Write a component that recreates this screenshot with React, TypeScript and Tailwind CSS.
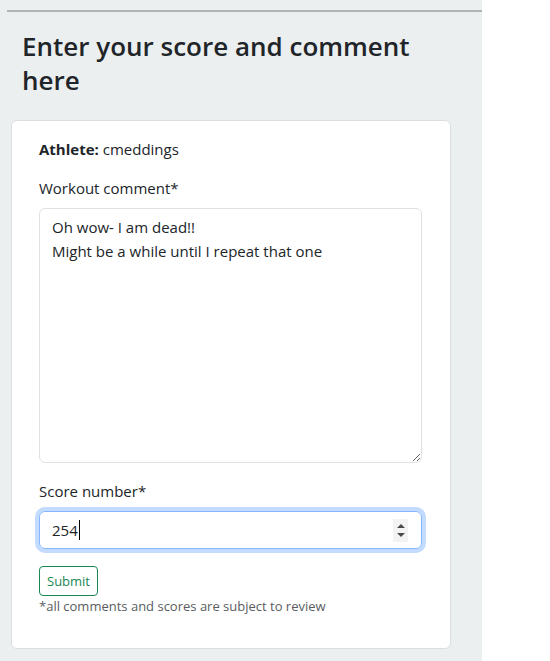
export default function App() {
  const font = { fontFamily: '"Open Sans", "Noto Sans", sans-serif' }

  return (
    <div className="flex h-[661px] w-[550px] bg-white text-[#212529]" style={font}>
      <div className="w-[482px] bg-[#eceff0] pt-[10px]">
        {/* top rule */}
        <div className="ml-[7px] h-[2px] bg-[#b1b4b6]" />

        <h2 className="mt-[17px] pl-[22px] pr-[40px] text-[26px] font-semibold leading-[34px] text-[#212529]">
          Enter your score and comment here
        </h2>

        {/* Card */}
        <div className="ml-[11px] mt-[23px] h-[529px] w-[440px] rounded-[6px] border border-[#dcdfe2] bg-white px-[27px] pt-[16px]">
          <p className="text-[15px] leading-[24px]">
            <span className="font-bold">Athlete:</span> cmeddings
          </p>

          <label className="mt-[15px] block text-[15px] leading-[24px]">Workout comment*</label>
          <textarea
            className="mt-[8px] block h-[255px] w-[383px] rounded-[6px] border border-[#dee2e6] px-[12px] py-[6px] text-[15px] leading-[24px] text-[#212529] outline-none"
            style={font}
            defaultValue={"Oh wow- I am dead!!\nMight be a while until I repeat that one"}
          />

          <label className="mt-[16px] block text-[15px] leading-[24px]">Score number*</label>
          <div className="mt-[8px] flex h-[38px] w-[383px] items-center rounded-[6px] border border-[#86b7fe] pl-[12px] pr-[13px] shadow-[0_0_0_4px_rgba(13,110,253,0.25)]">
            <span className="text-[15px] leading-[24px]">254</span>
            <span className="ml-[1px] h-[20px] w-px bg-black" />
            <div className="ml-auto flex h-[23px] w-[15px] flex-col items-center justify-center gap-[5px] bg-[#f3f3f3]">
              <span className="h-0 w-0 border-x-[4px] border-b-[4px] border-x-transparent border-b-[#4a4a4a]" />
              <span className="h-0 w-0 border-x-[4px] border-t-[4px] border-x-transparent border-t-[#4a4a4a]" />
            </div>
          </div>

          <button className="mt-[17px] block h-[30px] rounded-[4px] border border-[#198754] px-[7px] text-[13px] leading-[21px] text-[#198754]">
            Submit
          </button>
          <p className="text-[13px] leading-[21px] text-[#595c5f]">*all comments and scores are subject to review</p>
        </div>
      </div>
      <div className="flex-1" />
    </div>
  )
}
